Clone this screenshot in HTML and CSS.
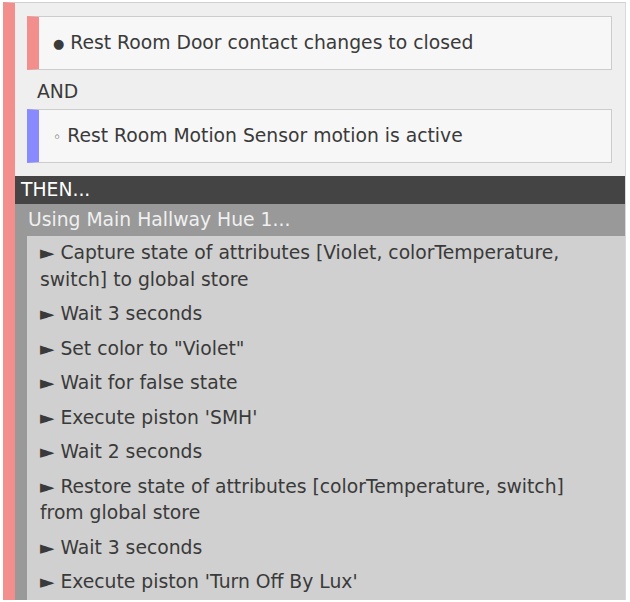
FILE: index.html
```html
<!DOCTYPE html>
<html lang="en">
<head>
    <meta charset="UTF-8">
    <meta name="viewport" content="width=device-width, initial-scale=1.0">
    <title>Piston</title>
    <link rel="stylesheet" href="styles.css">
</head>
<body>
    <!-- piston block -->
    <div class="piston">
        <div class="condition cond-red">
            <span class="mark">●</span> Rest Room Door contact changes to closed
        </div>
        <div class="operator">AND</div>
        <div class="condition cond-blue">
            <span class="mark small">◦</span> Rest Room Motion Sensor motion is active
        </div>

        <div class="then">THEN...</div>

        <div class="using">
            <div class="using-head">Using Main Hallway Hue 1...</div>
            <ul class="actions">
                <li>► Capture state of attributes [Violet, colorTemperature, switch] to global store</li>
                <li>► Wait 3 seconds</li>
                <li>► Set color to "Violet"</li>
                <li>► Wait for false state</li>
                <li>► Execute piston 'SMH'</li>
                <li>► Wait 2 seconds</li>
                <li>► Restore state of attributes [colorTemperature, switch] from global store</li>
                <li>► Wait 3 seconds</li>
                <li>► Execute piston 'Turn Off By Lux'</li>
            </ul>
        </div>
    </div>
</body>
</html>
```

FILE: styles.css
```css
/* page */
body {
    margin: 0;
    padding: 2px 4px 0 3px;
    background-color: #ffffff;
    font-family: "DejaVu Sans", Verdana, sans-serif;
    font-size: 18.75px;
    line-height: 26px;
    color: #3a3a3a;
}

/* outer block */
.piston {
    background-color: #efefef;
    border-left: 12px solid #f28f8c;
    border-top: 1px solid #d0d0d0;
    border-right: 1px solid #d8d8d8;
    padding-top: 13px;
}

/* conditions */
.condition {
    margin: 0 13px 0 12px;
    background-color: #f7f7f7;
    border: 1px solid #cccccc;
    padding: 13px 13px 13px 14px;
}

.cond-red {
    border-left: 12px solid #f28f8c;
}

.cond-blue {
    border-left: 12px solid #8a8aff;
}

.mark {
    font-size: 13px;
    line-height: 0;
    vertical-align: 1px;
}

.mark.small {
    font-size: 14px;
    vertical-align: 0;
}

.operator {
    padding: 9px 10px 4px 22px;
}

/* then */
.then {
    margin-top: 13px;
    background-color: #444444;
    color: #ffffff;
    padding: 1px 6px;
}

.using {
    border-left: 12px solid #999999;
}

.using-head {
    background-color: #999999;
    color: #f0f0f0;
    padding: 3px 0 3px 1px;
    margin-left: -12px;
    padding-left: 13px;
}

.actions {
    list-style: none;
    margin: 0;
    padding: 0;
    background-color: #d0d0d0;
}

.actions li {
    padding: 4px 13px;
    line-height: 26.5px;
}
```
